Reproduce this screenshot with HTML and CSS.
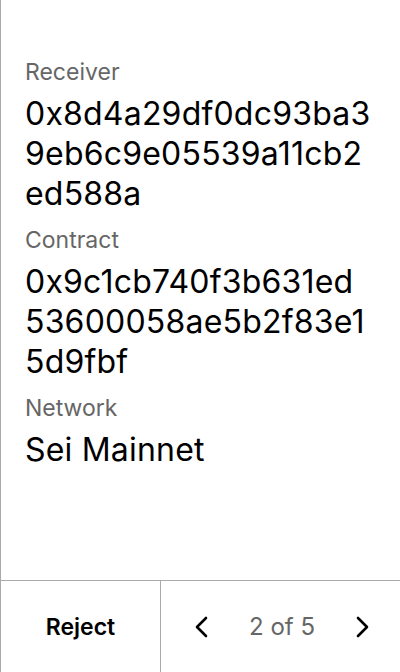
FILE: index.html
```html
<!DOCTYPE html>
<html>
<head>
<meta charset="utf-8">
<link rel="stylesheet" href="styles.css">
</head>
<body>
<div class="screen">
  <div class="content">
    <div class="field">
      <div class="label">Receiver</div>
      <div class="value"><span class="ln">0x8d4a29df0dc93ba3</span><span class="ln">9eb6c9e05539a11cb2</span><span class="ln">ed588a</span></div>
    </div>
    <div class="field">
      <div class="label">Contract</div>
      <div class="value"><span class="ln">0x9c1cb740f3b631ed</span><span class="ln">53600058ae5b2f83e1</span><span class="ln">5d9fbf</span></div>
    </div>
    <div class="field">
      <div class="label">Network</div>
      <div class="value">Sei Mainnet</div>
    </div>
  </div>
  <div class="footer">
    <div class="reject">Reject</div>
    <div class="pager">
      <svg class="chev" width="20" height="28" viewBox="0 0 20 28"><path d="M14 5 L5 14 L14 23" fill="none" stroke="#000" stroke-width="2.6" stroke-linecap="round" stroke-linejoin="round"/></svg>
      <span class="count">2 of 5</span>
      <svg class="chev" width="20" height="28" viewBox="0 0 20 28"><path d="M6 5 L15 14 L6 23" fill="none" stroke="#000" stroke-width="2.6" stroke-linecap="round" stroke-linejoin="round"/></svg>
    </div>
  </div>
</div>
</body>
</html>
```
FILE: styles.css
```css
html, body {
  margin: 0;
  padding: 0;
  background: #fff;
}
body {
  font-family: Inter, "Noto Sans", sans-serif;
  color: #000;
}
.screen {
  width: 400px;
  height: 672px;
  box-sizing: border-box;
  border-left: 1px solid #aaa;
  display: flex;
  flex-direction: column;
}
.content {
  flex: 1;
  padding: 58px 24px 0 24px;
  display: flex;
  flex-direction: column;
  gap: 12px;
}
.field {
  display: flex;
  flex-direction: column;
  gap: 8px;
}
.label {
  font-size: 23px;
  line-height: 28px;
  color: #666;
}
.value {
  font-size: 32px;
  line-height: 40px;
  letter-spacing: 0.2px;
  color: #000;
}
.ln {
  display: block;
  white-space: nowrap;
}
.footer {
  height: 92px;
  border-top: 1px solid #aaa;
  display: flex;
  box-sizing: border-box;
}
.reject {
  width: 159px;
  border-right: 1px solid #aaa;
  display: flex;
  align-items: center;
  justify-content: center;
  font-size: 23px;
  font-weight: 600;
}
.pager {
  flex: 1;
  display: flex;
  align-items: center;
  justify-content: space-between;
  padding: 0 28px 0 31px;
}
.count {
  font-size: 24px;
  color: #666;
}
```
